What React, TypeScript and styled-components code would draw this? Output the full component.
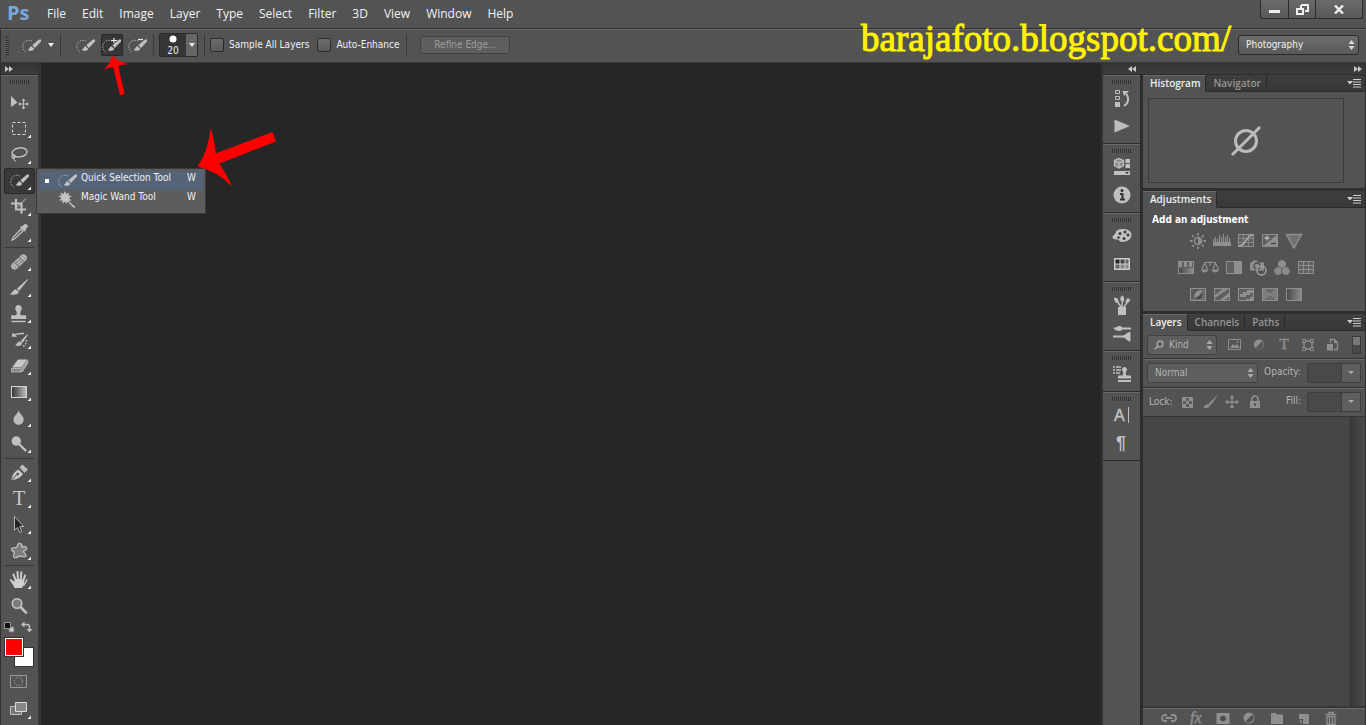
import React from "react";
import styled, { createGlobalStyle, css } from "styled-components";

const UI = `"DejaVu Sans Condensed", "DejaVu Sans", "Open Sans", sans-serif`;
const SEGOE = `"Open Sans", "Noto Sans", sans-serif`;

const Global = createGlobalStyle`
  * { box-sizing: border-box; }
  html, body { margin: 0; background: #262626; }
  button, select, input { font: inherit; color: inherit; margin: 0; }
  button { padding: 0; border: 0; background: none; }
  svg { display: block; flex: none; }
`;

/* ---------- shell ---------- */
const App = styled.div`
  display: flex;
  flex-direction: column;
  height: 100vh;
  overflow: hidden;
  position: relative;
  background: #535353;
  color: #f0f0f0;
  font: 10px/14px ${UI};
`;
const MenuBar = styled.header`
  display: flex;
  height: 29px;
  flex: none;
  border-bottom: 1px solid #2b2b2b;
`;
const Logo = styled.div`
  width: 38px;
  padding-left: 7px;
  font: 700 20px/26px ${SEGOE};
  color: #7aa7d8;
`;
const Menus = styled.nav`
  display: flex;
  flex: 1;
  align-items: center;
  gap: 16px;
  padding-left: 9px;
`;
const MenuButton = styled.button`
  font: 12px/28px ${SEGOE};
  color: #f2f2f2;
`;
const WindowButtons = styled.div`
  display: flex;
  height: 19px;
  margin-right: 3px;
  border: 1px solid #2c2c2c;
  border-top: 0;
  border-radius: 0 0 3px 3px;
  background: linear-gradient(#6a6a6a, #595959);
`;
const WindowButton = styled.button<{ $w: number }>`
  display: flex;
  justify-content: center;
  align-items: center;
  width: ${(p) => p.$w}px;
  & + & { border-left: 1px solid #2c2c2c; }
`;
const OptionsBar = styled.div`
  display: flex;
  align-items: center;
  flex: none;
  height: 34px;
  padding: 0 7px 2px 5px;
  border-top: 1px solid #6c6c6c;
  border-bottom: 1px solid #3a3a3a;
  border-left: 1px solid #2f2f2f;
`;
const VGrip = styled.span`
  width: 3px;
  height: 19px;
  margin-right: 13px;
  background: repeating-linear-gradient(#2e2e2e 0 1px, #5e5e5e 1px 2px);
`;
const VSep = styled.span<{ $l: number; $r: number }>`
  width: 1px;
  height: 22px;
  margin: 0 ${(p) => p.$r}px 0 ${(p) => p.$l}px;
  background: #3a3a3a;
`;
const ToolPreset = styled.button`
  display: flex;
  align-items: center;
  gap: 2px;
`;
const ModeButton = styled.button<{ $on?: boolean }>`
  display: flex;
  align-items: center;
  justify-content: center;
  width: 22px;
  height: 22px;
  margin-right: 4px;
  border-radius: 2px;
  ${(p) => p.$on && css`background: #363636; box-shadow: inset 0 0 0 1px #292929;`}
`;
const BrushSize = styled.button`
  display: flex;
  width: 39px;
  height: 24px;
  border: 1px solid #2b2b2b;
  border-radius: 2px;
  background: #353535;
`;
const BrushDot = styled.span`
  display: flex;
  flex: 1;
  flex-direction: column;
  align-items: center;
  gap: 1px;
  padding-top: 1px;
  line-height: 13px;
`;
const BrushDrop = styled.span`
  display: flex;
  align-items: center;
  justify-content: center;
  width: 11px;
  background: #666;
`;
const Check = styled.label`
  display: flex;
  align-items: center;
  gap: 5px;
  margin-right: 8px;
`;
const CheckBox = styled.input`
  appearance: none;
  width: 14px;
  height: 14px;
  border: 1px solid #2b2b2b;
  border-radius: 2px;
  background: linear-gradient(#6c6c6c, #5a5a5a);
`;
const Refine = styled.button`
  width: 90px;
  height: 18px;
  border: 1px solid #404040;
  border-radius: 3px;
  background: #5e5e5e;
  color: #9c9c9c;
`;
const Site = styled.div`
  flex: 1;
  margin-right: 7px;
  padding-bottom: 12px;
  text-align: right;
  white-space: nowrap;
  font: 37px/32px "Liberation Serif", serif;
  color: #fff200;
  -webkit-text-stroke: 1px #fff200;
`;

/* ---------- drop-downs ---------- */
const SelectBox = styled.span<{ $w: number; $dim?: boolean }>`
  position: relative;
  display: block;
  flex: none;
  width: ${(p) => p.$w}px;
  height: 20px;
  color: ${(p) => (p.$dim ? "#b4b4b4" : "#f0f0f0")};
  & > svg { position: absolute; right: 4px; top: 5px; pointer-events: none; }
`;
const Select = styled.select<{ $pad?: number; $dim?: boolean }>`
  appearance: none;
  width: 100%;
  height: 20px;
  padding: 0 12px 0 ${(p) => p.$pad ?? 7}px;
  border: 1px solid ${(p) => (p.$dim ? "#414141" : "#2b2b2b")};
  border-radius: 3px;
  background: ${(p) => (p.$dim ? "#5e5e5e" : "linear-gradient(#6d6d6d, #595959)")};
`;
const Lens = styled.span`
  position: absolute;
  left: 7px;
  top: 5px;
  pointer-events: none;
`;

/* ---------- work area ---------- */
const Work = styled.main`
  display: flex;
  flex: 1;
  min-height: 0;
  border-left: 1px solid #2f2f2f;
`;
const Toolbar = styled.aside`
  display: flex;
  flex: none;
  flex-direction: column;
  width: 40px;
  border-right: 3px solid #353535;
`;
const Strip = styled.div`
  display: flex;
  align-items: center;
  flex: none;
  height: 12px;
  background: linear-gradient(#333, #3d3d3d);
  border-bottom: 1px solid #2b2b2b;
`;
const ToolStrip = styled(Strip)`padding-left: 4px;`;
const ToolGrip = styled.div`
  flex: none;
  height: 15px;
  padding: 4px 0 0 9px;
  border-top: 1px solid #6a6a6a;
`;
const Dots = styled.span`
  display: block;
  width: 19px;
  height: 4px;
  background: repeating-linear-gradient(90deg, #2e2e2e 0 1px, #5e5e5e 1px 2px);
`;
const ToolSlot = styled.div`
  position: relative;
  flex: none;
  height: 26px;
  padding-left: 3px;
`;
const ToolButton = styled.button<{ $on?: boolean }>`
  display: block;
  width: 31px;
  height: 26px;
  border-radius: 3px;
  ${(p) => p.$on && css`background: #383838; box-shadow: inset 0 0 0 1px #282828;`}
`;
const ToolSep = styled.hr`
  flex: none;
  width: 29px;
  height: 1px;
  margin: 1px 0 1px 4px;
  border: 0;
  background: #383838;
`;
const SwatchMini = styled.div`
  display: flex;
  justify-content: space-between;
  flex: none;
  width: 29px;
  margin: 2px 0 4px 3px;
`;
const Swatches = styled.div`
  position: relative;
  flex: none;
  height: 32px;
  margin-left: 3px;
`;
const Swatch = styled.button<{ $c: string; $back?: boolean }>`
  position: absolute;
  left: ${(p) => (p.$back ? 10 : 0)}px;
  top: ${(p) => (p.$back ? 10 : 0)}px;
  width: 20px;
  height: 20px;
  background: ${(p) => p.$c};
  border: 1px solid #333;
  box-shadow: inset 0 0 0 1px #fff;
`;

const Flyout = styled.ul`
  position: absolute;
  z-index: 2;
  left: 35px;
  top: 0;
  width: 170px;
  height: 46px;
  margin: 0;
  padding: 2px;
  list-style: none;
  border: 1px solid #3a3a3a;
  background: #5d5d5d;
`;
const FlyItem = styled.button<{ $on?: boolean }>`
  display: flex;
  align-items: center;
  width: 100%;
  height: 19px;
  padding: 0 7px 0 6px;
  text-align: left;
  ${(p) => p.$on && css`background: #556378;`}
`;
const FlyMark = styled.span<{ $on?: boolean }>`
  width: 4px;
  height: 4px;
  margin-right: 9px;
  ${(p) => p.$on && css`background: #fff;`}
`;
const FlyName = styled.span`
  flex: 1;
  padding: 0 0 5px 3px;
`;
const FlyKey = styled.span`padding-bottom: 5px;`;

const Canvas = styled.section`
  flex: 1;
  background: #262626;
`;
const Dock = styled.aside`
  display: flex;
  flex: none;
  flex-direction: column;
  width: 265px;
  border-left: 2px solid #333;
  border-right: 1px solid #2f2f2f;
`;
const DockStrip = styled(Strip)`
  justify-content: space-between;
  padding: 0 3px 0 25px;
`;
const DockBody = styled.div`
  display: flex;
  flex: 1;
  min-height: 0;
`;
const IconColumn = styled.div`
  width: 40px;
  border-right: 3px solid #2d2d2d;
`;
const IconGroup = styled.div`
  padding: 4px 0 3px;
  border-top: 1px solid #6a6a6a;
  border-bottom: 1px solid #2b2b2b;
  & > span { margin: 0 auto; }
`;
const PanelButton = styled.button`
  display: flex;
  align-items: center;
  justify-content: center;
  width: 37px;
  height: 28px;
`;
const Panels = styled.div`
  display: flex;
  flex: 1;
  flex-direction: column;
  min-width: 0;
`;
const Panel = styled.section<{ $h?: number }>`
  display: flex;
  flex-direction: column;
  ${(p) => (p.$h ? css`flex: none; height: ${p.$h}px; border-bottom: 3px solid #2f2f2f;` : css`flex: 1; min-height: 0;`)}
`;
const Tabs = styled.div`
  display: flex;
  flex: none;
  height: 17px;
  background: linear-gradient(#3e3e3e, #383838);
`;
const Tab = styled.button<{ $on?: boolean }>`
  padding: 0 5px 1px 7px;
  border-right: 1px solid #2a2a2a;
  font: 600 10px/14px ${SEGOE};
  color: ${(p) => (p.$on ? "#f0f0f0" : "#969696")};
  border-top: 1px solid ${(p) => (p.$on ? "#6a6a6a" : "transparent")};
  border-bottom: 1px solid ${(p) => (p.$on ? "transparent" : "#2a2a2a")};
  ${(p) => p.$on && css`background: #535353;`}
`;
const TabRest = styled.span`
  display: flex;
  flex: 1;
  align-items: center;
  justify-content: flex-end;
  padding-right: 4px;
  border-bottom: 1px solid #2a2a2a;
`;
const Histogram = styled.div`
  display: flex;
  flex: 1;
  align-items: center;
  justify-content: center;
  margin: 6px 21px 5px 5px;
  border: 1px solid #3b3b3b;
`;
const AdjTitle = styled.h2`
  margin: 5px 0 5px 9px;
  font: 700 10px/14px ${UI};
  color: #fff;
`;
const AdjRow = styled.div`
  display: flex;
  justify-content: center;
  padding-right: 16px;
  margin-bottom: 9px;
`;
const AdjButton = styled.button`
  display: flex;
  justify-content: center;
  width: 24px;
  height: 18px;
`;
const LayerRow = styled.div`
  display: flex;
  align-items: center;
  flex: none;
  height: 28px;
  padding: 0 4px;
  color: #b4b4b4;
  border-bottom: 1px solid #333;
  & + & {
    height: 29px;
    padding-bottom: 2px;
    border-top: 1px solid #6a6a6a;
  }
`;
const FilterIcons = styled.div`
  display: flex;
  flex: 1;
  justify-content: space-between;
  padding: 0 13px 0 11px;
`;
const PlainButton = styled.button`
  display: flex;
  align-items: center;
  justify-content: center;
`;
const Toggle = styled.button`
  width: 9px;
  height: 18px;
  border: 1px solid #3b3b3b;
  background: linear-gradient(#777 0 8px, #484848 8px);
`;
const RowLabel = styled.label<{ $push?: boolean }>`
  margin-left: ${(p) => (p.$push ? "auto" : "2px")};
  padding-bottom: ${(p) => (p.$push ? 2 : 0)}px;
`;
const Combo = styled.span`
  display: flex;
  width: 54px;
  height: 20px;
  margin-left: 6px;
  border: 1px solid #3d3d3d;
  border-radius: 2px;
`;
const ComboInput = styled.input`
  width: 34px;
  padding: 0 2px;
  border: 0;
  border-right: 1px solid #3d3d3d;
  background: #494949;
`;
const ComboDrop = styled.button`
  display: flex;
  flex: 1;
  align-items: center;
  justify-content: center;
  background: #5e5e5e;
`;
const Locks = styled.div`
  display: flex;
  gap: 6px;
  padding-left: 7px;
`;
const LayerArea = styled.div`
  display: flex;
  flex: 1;
  min-height: 0;
  background: #464646;
  border-bottom: 2px solid #363636;
`;
const ScrollTrack = styled.div`
  width: 15px;
  margin-left: auto;
  border-left: 1px solid #333;
  background: linear-gradient(90deg, #3a3a3a, #4a4a4a);
`;
const LayerFoot = styled.div`
  display: flex;
  flex: none;
  height: 17px;
  padding: 1px 0 0 12px;
  border-top: 1px solid #6c6c6c;
`;
const FootButton = styled.button`
  display: flex;
  justify-content: center;
  width: 27px;
  height: 16px;
`;
const Overlay = styled.svg<{ $x: number; $y: number }>`
  position: absolute;
  z-index: 3;
  left: ${(p) => p.$x}px;
  top: ${(p) => p.$y}px;
  pointer-events: none;
`;

/* ---------- icon drawing ---------- */
const L = "#c0c0c0";
const UpDown = ({ c = "#d8d8d8" }: { c?: string }) => (
  <svg width="7" height="10"><path d="M.5 4h6L3.500 0zM.5 6h6L3.500 10z" fill={c} /></svg>
);
const Chevrons = ({ left }: { left?: boolean }) => (
  <svg width="8" height="6" viewBox="0 0 8 6">
    <path d={left ? "M4 0v6L0 3zM8 0v6L4 3z" : "M0 0v6l4-3zM4 0v6l4-3z"} fill="#c8c8c8" />
  </svg>
);
const PanelMenu = () => (
  <svg width="14" height="9">
    <path d="M0 2h6L3 5.500z" fill="#ccc" />
    <path d="M6 .5h8M6 3h8M6 5.500h8M6 8h8" stroke="#ccc" />
  </svg>
);

/* brush with a dotted selection ring, origin at the ring's top left */
const QuickBrush = ({ sign }: { sign?: "+" | "-" }) => (
  <>
    <path d="M13 3.500A6 6 0 1 0 7 14.500" transform="translate(-3 -.5)" fill="none" stroke="#c8c8c8" strokeWidth="1" strokeDasharray="1.200 1.300" />
    <path d="M19 1.500 17 1.500 10.300 7.300l2.600 2.800L19 3.500z" fill={L} />
    <path d="M9.500 8.200c-2 .3-2 2.800-3.700 3.800 2.600 1.600 6 .8 6.400-1.300z" fill={L} />
    {sign && <path d={sign === "+" ? "M9 2.500h6M12 0v5" : "M10 1.500h5"} stroke="#eee" strokeWidth="1.200" />}
  </>
);
const QuickIcon = ({ sign }: { sign?: "+" | "-" }) => (
  <svg width="20" height="15" viewBox="0 0 20 15"><QuickBrush sign={sign} /></svg>
);

const tools: { name: string; art: React.ReactNode; noMore?: boolean; sep?: boolean; on?: boolean }[] = [
  { name: "Move", noMore: true, art: <><path d="M7 6v11l6.500-4.500z" fill={L} /><path d="M15 14h9M19.500 9.500v9" stroke={L} strokeWidth="1.200" /><path d="m19.500 8.500-2 2.500h4zM19.500 19.500l-2-2.500h4zM14 14l2.500-2v4zM25 14l-2.500-2v4z" fill={L} /></> },
  { name: "Marquee", art: <path d="M8.500 6.500h13v12h-13z" fill="none" stroke="#d4d4d4" strokeDasharray="3 2" /> },
  { name: "Lasso", art: <g fill="none" stroke={L} strokeWidth="1.500"><ellipse cx="15.500" cy="10.500" rx="7.500" ry="4.500" transform="rotate(-8 15 10)" /><circle cx="9.500" cy="14.500" r="1.500" /><path d="M10 16c-.5 2 0 3 2 3" strokeWidth="1" /></g> },
  { name: "Quick Selection", on: true, art: <g transform="translate(6 5)"><QuickBrush /></g> },
  { name: "Crop", art: <><path d="M7 9.500h10.500V19.500M12 5v10.500H22" fill="none" stroke={L} strokeWidth="2.200" /><path d="m22 4.500-9 9" stroke={L} /></> },
  { name: "Eyedropper", sep: true, art: <><path d="m17 9-8 8.500-1 2.500 2.500-1L19 11z" fill="none" stroke={L} strokeWidth="1.300" /><path d="m16 7 1.500-1 1 .5C20 4 22 3.500 23.200 4.700s.5 3-1.700 4.500l.5 1-1 1.500z" fill={L} /></> },
  { name: "Healing Brush", art: <g transform="rotate(-43 15 13)"><rect x="5.500" y="9.500" width="19" height="7" rx="3.500" fill="#b4b4b4" /><path d="M11.500 9.500v7M18.500 9.500v7" stroke="#777" /><path d="M13 11.500h1.200M15.800 11.500H17M13 14.500h1.200M15.800 14.500H17" stroke="#444" /><path d="M8 11.500h1.200M8 14.500h1.200M21 11.500h1.200M21 14.500h1.200" stroke="#777" /></g> },
  { name: "Brush", art: <><path d="M23.500 4 13 13.500l2 2.500L23.900 5z" fill={L} /><path d="M12 14.200c-3 .2-3.300 3.300-6 5 4 1.300 8.500.6 8.700-2.400z" fill={L} /></> },
  { name: "Clone Stamp", art: <><path d="M14.500 4a3.500 3.500 0 0 1 2.300 6c-.8.8-.8 3.500.2 4.300h5.200V18H7.200v-3.700H12c1-.8 1-3.500.2-4.300A3.500 3.500 0 0 1 14.500 4z" fill={L} /><path d="M7.500 20.500h14" stroke={L} strokeWidth="1.500" /></> },
  { name: "History Brush", art: <><path d="m23.500 7-6.800 7 2 2L23.700 8zM16 14.500c-2.500 0-3 2.500-5 4 3.500 1 7 .3 7-2.500z" fill={L} /><path d="M9 9c4-3 8-2.500 11-2.500" fill="none" stroke={L} strokeWidth="1.500" /><path d="m7.500 9.500 5.500.5-4-4.500z" fill={L} /><path d="M22.500 13c0 3-1 5-3.500 6.500" fill="none" stroke={L} strokeDasharray="1.500 1.500" strokeWidth="1.500" /></> },
  { name: "Eraser", art: <><path d="m14 6.500h9.500l-6 8H8z" fill="#c8c8c8" /><path d="M7.500 15.500h9.500V19H7.500z" fill="#888" stroke={L} strokeWidth=".8" /><path d="m18 15.500 5.800-8V10L18 19z" fill="#9a9a9a" stroke="#ccc" strokeWidth=".8" /></> },
  { name: "Gradient", art: <rect x="7.500" y="7.500" width="15" height="11" fill="url(#grad)" stroke="#d4d4d4" /> },
  { name: "Blur", art: <path d="M14.700 5c.8 4 5 6 5 9.700a5.100 5.100 0 0 1-10.300 0C9.400 11 13.900 9 14.700 5z" fill="#bcbcbc" /> },
  { name: "Dodge", sep: true, art: <><circle cx="12.300" cy="10" r="4.700" fill="#c0c0c0" /><path d="m15.500 13.500 6 6" stroke={L} strokeWidth="2.400" strokeLinecap="round" /></> },
  { name: "Pen", art: <><path d="M7.500 20c.5-4 2-8 7-10.500l4.500 4.500C16.500 18 12.500 19.500 7.500 20z" fill="#c8c8c8" /><path d="m15.500 7.500 3-3 5.500 5-3.500 3.500z" fill="#bbb" /><path d="m8 19.500 5-5" stroke="#444" /><circle cx="13.700" cy="14" r="1.200" fill="#444" /></> },
  { name: "Type", art: <text x="15" y="19" textAnchor="middle" fill="#c8c8c8" fontFamily="Liberation Serif, serif" fontSize="20">T</text> },
  { name: "Path Selection", art: <path d="M10.500 4.500V18l3-2.500 2.200 5 2-1-2-5h4z" fill="#222" stroke="#b4b4b4" /> },
  { name: "Custom Shape", sep: true, art: <path d="M15 5.500c2.500-.5 3 1 2.800 3.300 2-.5 5-.5 5 1.700 0 2-2.500 2-3.500 3 .5 1.500 3.500 2.500 2.500 4.700-1.200 2-4.500-.5-6-.2-2 .5-4 2.700-6 1.200-1.500-1.500 1-3.500.5-5-.8-1-3.300-1.500-2.800-3.400.6-1.800 3.500-.8 5-1.500C13.800 8.500 13 6 15 5.500z" fill="#7d7d7d" stroke="#bdbdbd" strokeWidth="1.300" /> },
  { name: "Hand", art: <><path d="M10.500 21c-1-3.200-3.700-5.500-4.800-8.300.8-1 2-.5 4 2L12 12h6l2 3v3l-2.300 3z" fill="#cfcfcf" /><path d="M11.700 13.500 9.500 7.500M14 13l-.5-8M16.800 13l.5-7.700M19 14.500l2-6" stroke="#cfcfcf" strokeWidth="2" strokeLinecap="round" /><path d="m20 18 2.800-5" stroke="#cfcfcf" strokeWidth="1.500" strokeLinecap="round" /></> },
  { name: "Zoom", noMore: true, art: <><circle cx="13" cy="10.500" r="4.700" fill="#7c7c7c" stroke="#c4c4c4" strokeWidth="1.600" /><path d="m17 14.500 5 5" stroke={L} strokeWidth="2.600" strokeLinecap="round" /></> },
];

const Tool = ({ name, art, noMore, on }: { name: string; art: React.ReactNode; noMore?: boolean; on?: boolean }) => (
  <ToolButton aria-label={name} $on={on}>
    <svg width="30" height="26" viewBox="0 0 30 26">
      {art}
      {!noMore && <path d="M27 18.500V22h-3.500z" fill="#eee" />}
    </svg>
  </ToolButton>
);

const Svg = ({ w = 20, h = 20, children }: { w?: number; h?: number; children: React.ReactNode }) => (
  <svg width={w} height={h} viewBox={`0 0 ${w} ${h}`} fill="none">{children}</svg>
);
const D = "#8f8f8f";

const iconGroups: [string, React.ReactNode][][] = [
  [
    ["History", <><path d="M3.500 2.500h4v3h-4zM3.500 8.500h4v3h-4z" stroke={L} /><path d="M3 14h5v5H3z" fill={L} /><path d="M12 18c5-3 5-8 2.500-12" stroke={L} strokeWidth="2" /><path d="M10.500 3h6.500l-5 5z" fill={L} /></>],
    ["Actions", <path d="M2.500 3.500v13L18 10z" fill="#bdbdbd" />],
  ],
  [
    ["Properties", <><path d="m7 1.500 4.500 2v5L7 11 2.500 8.500v-5z" fill="#8a8a8a" /><path d="m7 1.500 4.500 2v5L7 11 2.500 8.500v-5zM2.500 4 7 6l4.500-2M7 6v5" stroke={L} strokeWidth="1.300" /><path d="M13.500 2H18v4h-4.500zM13.500 7H18v4h-4.500zM2 14h16v4H2z" fill={L} /><path d="M13 15h4l-2 2z" fill="#333" /></>],
    ["Info", <><circle cx="10" cy="10" r="8.500" fill={L} /><path d="M8 9h2.500v6M8 14.500h5" stroke="#333" strokeWidth="2" /><circle cx="10" cy="5.500" r="1.500" fill="#333" /></>],
  ],
  [
    ["Color", <><path d="M11 3c5.500 0 8.500 2.500 8.500 6 0 4-4 7-9.500 7-3 0-2.500-2.500-4.500-2.500C3 13.500.5 13 .5 11c0-1.800 2.500-2 3-4C4 4.500 7 3 11 3z" fill={L} /><g fill="#3c3c3c"><circle cx="6.500" cy="11.500" r="1.300" /><circle cx="8" cy="7.500" r="1.500" /><circle cx="13" cy="6" r="1.500" /><circle cx="16" cy="9" r="1.500" /><circle cx="12" cy="12.500" r="1.500" /></g></>],
    ["Swatches", <><path d="M2 4h16v12H2z" fill="#ccc" /><path d="M3.500 5.500h4v4h-4z" fill="#222" /><path d="M8.500 5.500h4v4h-4z" fill="#444" /><path d="M13.500 5.500h3v4h-3zM3.500 10.500h4v4h-4z" fill="#666" /><path d="M8.500 10.500h4v4h-4zM13.500 10.500h3v4h-3z" fill="#888" /></>],
  ],
  [
    ["Brush Presets", <><path d="M6 12h8v8H6z" fill={L} /><path d="M9 12 4.500 5M10 12l.5-8M12 12l4-6" stroke={L} strokeWidth="1.500" /><path d="M2 3c3-1 5 1 4.500 5C4 8.500 2 6.500 2 3zM9 6c-1.500-2-.5-5 2-5.500C12 2 12.500 4 12 6.500zM13 7l2.500-4 3 1.500-2 3z" fill={L} /></>],
    ["Brush", <><path d="M10 5.500h9M1 13.500h11" stroke={L} strokeWidth="2" /><path d="M1 4.500c3 1 4-2 7-1.500 3 .5 3 4.500 0 5-3 .3-5-.5-7-3.500zM11.500 12.500c2-.5 4-4 7-3.500v9.500c-3 0-5-3.500-7-4z" fill={L} /></>],
  ],
  [
    ["Clone Source", <><path d="M1 3h2M1 6h2M1 9h2M4 3h5M4 6h5M4 9h4" stroke={L} strokeWidth="1.500" /><path d="M12.500 3a2.700 2.700 0 0 1 1.700 4.600c-.6.8-.6 3.200.2 3.900H19v3H6v-3h4.600c.8-.7.8-3.100.2-3.900A2.700 2.700 0 0 1 12.500 3zM6 16h13v2H6z" fill={L} /></>],
  ],
  [
    ["Character", <><text x="2" y="16" fill={L} stroke={L} strokeWidth=".5" fontFamily="Liberation Sans, sans-serif" fontSize="16">A</text><path d="M16.500 2v16" stroke={L} /></>],
    ["Paragraph", <text x="4" y="16" fill={L} fontFamily="Liberation Sans, sans-serif" fontWeight="700" fontSize="18">¶</text>],
  ],
];

const F = () => <rect x="1.500" y="2.500" width="15" height="12" stroke={D} fill="#5f5f5f" />;
const adjustments: [string, React.ReactNode][][] = [
  [
    ["Brightness/Contrast", <><circle cx="9" cy="9" r="3.500" stroke={D} strokeWidth="1.500" /><path d="M9 5.500a3.500 3.500 0 0 1 0 7z" fill={D} /><path d="M9 1v2.500M9 14.500V17M1 9h2.500M14.500 9H17M3.300 3.300 5 5M13 13l1.700 1.700M14.700 3.300 13 5M5 13l-1.700 1.700" stroke={D} strokeWidth="1.800" /></>],
    ["Levels", <><path d="M0 10h18v4H0z" fill={D} /><path d="M.5 10V7M2.500 10V5M4.500 10V7M6.500 10V3M8.500 10V5M10.500 10V2M12.500 10V5M14.500 10V3M16.500 10V6" stroke={D} strokeWidth="1.200" /></>],
    ["Curves", <><F /><path d="M6.500 3v11M11.500 3v11M2 6.500h14M2 10.500h14" stroke="#848484" /><path d="M2 14c7 0 7-11 14-11" stroke="#aaa" strokeWidth="1.500" /></>],
    ["Exposure", <><F /><path d="m2 14 14-11v11z" fill={D} /><path d="M3.500 6h5M6 3.500v5" stroke="#bbb" strokeWidth="1.300" /><path d="M10 11.500h5" stroke="#444" strokeWidth="1.300" /></>],
    ["Vibrance", <path d="M1.500 2.500h15L9 16z" stroke={D} strokeWidth="1.500" fill="#707070" />],
  ],
  [
    ["Hue/Saturation", <><F /><path d="M2 3h3v5H2zM7 3h3v5H7zM12 3h3v5h-3z" fill={D} /><path d="M2 9h14v5H2z" fill="url(#dim)" /></>],
    ["Color Balance", <><path d="M3 3.500h12M9 2v5M3.500 4 1 10M3.500 4 6.500 10M14.500 4 12 10M14.500 4 17.500 10" stroke={D} strokeWidth="1.200" /><path d="M0 10.500h7.500c-1 4-6.500 4-7.500 0zM10.500 10.500H18c-1 4-6.500 4-7.500 0z" fill={D} /></>],
    ["Black & White", <><F /><path d="M9 3h7v11H9z" fill={D} /></>],
    ["Photo Filter", <><path d="M1 3.500h2l1-2h4l1 2h6v8H1z" fill={D} /><circle cx="8" cy="7" r="3" stroke="#4d4d4d" strokeWidth="1.300" /><circle cx="12.500" cy="11.500" r="4.500" stroke="#a0a0a0" strokeWidth="1.500" /></>],
    ["Channel Mixer", <><circle cx="9" cy="5.500" r="4.200" fill={D} /><circle cx="5.200" cy="12" r="4.300" fill="#8a8a8a" stroke="#555" strokeWidth=".8" /><circle cx="12.800" cy="12" r="4.300" fill="#8a8a8a" stroke="#555" strokeWidth=".8" /></>],
    ["Color Lookup", <><F /><path d="M6.500 3v11M11.500 3v11M2 6.500h14M2 10.500h14" stroke={D} /></>],
  ],
  [
    ["Invert", <><F /><path d="M16 3v11H2z" fill="#6c6c6c" /><circle cx="9" cy="8.500" r="4.500" fill="#484848" /><path d="M5.500 12C4 7 8 3.500 13.500 4c-1 4-4 7-8 8z" fill={D} /></>],
    ["Posterize", <><F /><path d="m2 9 8-6h5L2 12zM7 14l9-7v4l-4 3z" fill={D} /></>],
    ["Threshold", <><F /><path d="M3 8h3V6h4V4h6v3h-3v2H9v2H3zM9 13h4v-2h3v3H9z" fill={D} /></>],
    ["Selective Color", <><F /><path d="M2 3h14L9 8.500zM2 14h14L9 8.500z" fill="#6a6a6a" /><path d="M2 3v11l7-5.500zM16 3v11L9 8.500z" fill="#7c7c7c" /><path d="m2 3 14 11M16 3 2 14" stroke={D} /></>],
    ["Gradient Map", <rect x="1.500" y="2.500" width="15" height="12" stroke={D} fill="url(#dim)" />],
  ],
];

const filters: [string, React.ReactNode][] = [
  ["Pixel layers", <><path d="M.5 2.500h12v10H.5z" stroke={D} /><path d="m2 11 3-4 2 2 2-2 3 4z" fill={D} /><circle cx="9.500" cy="5" r="1" fill={D} /></>],
  ["Adjustment layers", <><circle cx="7" cy="7.500" r="5" fill={D} /><path d="M3.800 10.700 10.200 4.300A4.500 4.500 0 0 1 3.800 10.700z" fill="#555" /></>],
  ["Type layers", <text x="7" y="12" textAnchor="middle" fill={D} stroke={D} strokeWidth=".5" fontFamily="Liberation Serif, serif" fontSize="15">T</text>],
  ["Shape layers", <><path d="M3 4h8v8H3z" stroke={D} strokeWidth="1.300" /><path d="M1.500 2.500h3v3h-3zM9.500 2.500h3v3h-3zM1.500 10.500h3v3h-3zM9.500 10.500h3v3h-3z" fill="#535353" stroke={D} /></>],
  ["Smart objects", <><path d="M5.500 6V2.500h4l3 3v7H9" stroke={D} strokeWidth="1.300" /><path d="M2 7h6v6.500H2z" fill={D} /><path d="M9 2v4h4z" fill={D} /></>],
];
const locks: [string, React.ReactNode][] = [
  ["Lock transparent pixels", <><path d="M2.500 3.500h10v10h-10z" stroke={D} fill="#5c5c5c" /><path d="M3 4h3v3H3zM9 4h3v3H9zM6 7h3v3H6zM3 10h3v3H3zM9 10h3v3H9z" fill={D} /></>],
  ["Lock image pixels", <><path d="M16 1 6.500 9.500l2 2z" fill={D} /><path d="M6 10c-2 0-3 2-5 3.500 4 1 7 0 7-2z" fill={D} /></>],
  ["Lock position", <><path d="M8 3v10M3 8h10" stroke={D} strokeWidth="1.300" /><path d="m8 1-2.500 3h5zM8 15l-2.500-3h5zM1 8l3-2.500v5zM15 8l-3-2.500v5z" fill={D} /></>],
  ["Lock all", <><path d="M4 7h10v7H4z" fill={D} /><path d="M6 7V5a3 3 0 0 1 6 0v2" stroke={D} strokeWidth="1.600" /><path d="M9 9v3" stroke="#444" strokeWidth="1.500" /></>],
];
const foot: [string, React.ReactNode][] = [
  ["Link layers", <path d="M7 5H5a3 3 0 0 0 0 6h2M11 5h2a3 3 0 0 1 0 6h-2M5.500 8h7" stroke={D} strokeWidth="1.800" />],
  ["Layer style", <text x="3" y="13" fill={D} stroke={D} strokeWidth=".4" fontFamily="Liberation Serif, serif" fontStyle="italic" fontSize="16">fx</text>],
  ["Layer mask", <><path d="M2.500 3h13v11h-13z" fill={D} /><circle cx="9" cy="8.500" r="2.800" fill="#4b4b4b" /></>],
  ["Adjustment layer", <><circle cx="8" cy="8" r="5.500" fill={D} /><path d="M4.500 11.500 11.500 4.500A5 5 0 0 1 4.500 11.500z" fill="#505050" /></>],
  ["Group", <path d="M3 3h5l1 1.500h6V14H3z" fill={D} />],
  ["New layer", <><path d="M4 4h10v10H8V9H4z" fill={D} /><path d="M4 10.500h3V14z" fill={D} /></>],
  ["Delete", <><path d="M3.500 4.500h11M7 4V2.500h4V4" stroke={D} strokeWidth="1.500" /><path d="M5 6.500h8v8H5zM7.500 7v7M10.500 7v7" stroke={D} strokeWidth="1.300" /></>],
];

const menus = ["File", "Edit", "Image", "Layer", "Type", "Select", "Filter", "3D", "View", "Window", "Help"];

export default function Photoshop() {
  return (
    <App>
      <Global />
      <svg width="0" height="0" style={{ position: "absolute" }}>
        <defs>
          <linearGradient id="grad"><stop stopColor="#333" /><stop offset="1" stopColor="#c0c0c0" /></linearGradient>
          <linearGradient id="dim"><stop stopColor="#484848" /><stop offset="1" stopColor="#8e8e8e" /></linearGradient>
        </defs>
      </svg>

      <MenuBar>
        <Logo>Ps</Logo>
        <Menus>{menus.map((m) => <MenuButton key={m}>{m}</MenuButton>)}</Menus>
        <WindowButtons>
          <WindowButton $w={27} aria-label="Minimize"><Svg w={11} h={9}><path d="M0 5h11v3H0z" fill="#eee" /></Svg></WindowButton>
          <WindowButton $w={27} aria-label="Restore"><Svg w={13} h={11}><path d="M5 1h7v6H9M5 1v3M1 5h6v5H1z" stroke="#eee" strokeWidth="2" /></Svg></WindowButton>
          <WindowButton $w={47} aria-label="Close"><Svg w={10} h={9}><path d="m1 .5 8 8M9 .5l-8 8" stroke="#eee" strokeWidth="2.400" /></Svg></WindowButton>
        </WindowButtons>
      </MenuBar>

      <OptionsBar>
        <VGrip />
        <ToolPreset aria-label="Tool preset"><QuickIcon /><Svg w={10} h={4}><path d="M4 0h6L7 4z" fill="#eee" /></Svg></ToolPreset>
        <VSep $l={6} $r={14} />
        <ModeButton aria-label="New selection"><QuickIcon /></ModeButton>
        <ModeButton $on aria-label="Add to selection"><QuickIcon sign="+" /></ModeButton>
        <ModeButton aria-label="Subtract from selection"><QuickIcon sign="-" /></ModeButton>
        <VSep $l={0} $r={5} />
        <BrushSize aria-label="Brush size">
          <BrushDot><Svg w={8} h={8}><circle cx="4" cy="4" r="3.500" fill="#fff" /></Svg>20</BrushDot>
          <BrushDrop><Svg w={6} h={4}><path d="M0 0h6L3 4z" fill="#eee" /></Svg></BrushDrop>
        </BrushSize>
        <VSep $l={6} $r={5} />
        <Check><CheckBox type="checkbox" />Sample All Layers</Check>
        <Check><CheckBox type="checkbox" />Auto-Enhance</Check>
        <VSep $l={-1} $r={13} />
        <Refine>Refine Edge...</Refine>
        <Site>barajafoto.blogspot.com/</Site>
        <SelectBox $w={121}>
          <Select aria-label="Workspace"><option>Photography</option></Select>
          <UpDown />
        </SelectBox>
      </OptionsBar>

      <Work>
        <Toolbar>
          <ToolStrip><Chevrons /></ToolStrip>
          <ToolGrip><Dots /></ToolGrip>
          {tools.map((t) => (
            <React.Fragment key={t.name}>
              <ToolSlot>
                <Tool {...t} />
                {t.on && (
                  <Flyout>
                    <li><FlyItem $on><FlyMark $on /><QuickIcon /><FlyName>Quick Selection Tool</FlyName><FlyKey>W</FlyKey></FlyItem></li>
                    <li><FlyItem><FlyMark /><Svg w={20} h={17}><path d="m7 0 1.300 3L11 1.500 10.500 4.500l3.500.5-3 2 2.500 2.500-3 .5L17.500 16l-1.500 1-6.500-6.500L8.500 13 7 10.500 4.500 12.500 4.500 9.500 1 9.500 3.500 7 0 5l3.500-.5L2.500 1.500 5.500 3z" fill="#c4c4c4" /></Svg><FlyName>Magic Wand Tool</FlyName><FlyKey>W</FlyKey></FlyItem></li>
                  </Flyout>
                )}
              </ToolSlot>
              {t.sep && <ToolSep />}
            </React.Fragment>
          ))}
          <SwatchMini>
            <PlainButton aria-label="Default colors"><Svg w={11} h={12}><path d="M5 6h5v5H5z" fill="#ccc" stroke="#777" /><path d="M.5 1.500h6v6h-6z" fill="#111" stroke="#999" /></Svg></PlainButton>
            <PlainButton aria-label="Swap colors"><Svg w={12} h={12}><path d="M3 3.500h3a2.500 2.500 0 0 1 2.500 2.500v2" stroke={L} strokeWidth="1.400" /><path d="M0 3.500 3.500.5v6zM5.500 8h6l-3 3.500z" fill={L} /></Svg></PlainButton>
          </SwatchMini>
          <Swatches>
            <Swatch $c="#fff" $back aria-label="Background color" />
            <Swatch $c="#f00" aria-label="Foreground color" />
          </Swatches>
          <ToolSlot><ToolButton aria-label="Quick mask"><Svg w={30} h={26}><path d="M6.500 6.500h16v12h-16z" stroke="#9a9a9a" /><circle cx="14.500" cy="12.500" r="4" stroke="#aaa" strokeDasharray="1.200 1.300" /></Svg></ToolButton></ToolSlot>
          <ToolSlot><ToolButton aria-label="Screen mode"><Svg w={30} h={26}><path d="M6.500 11.500h11v8h-11z" fill="#777" stroke={L} /><path d="M11.500 7.500h11v9h-11z" fill="#888" stroke="#ddd" /><path d="M27 20.500V24h-3.500z" fill="#eee" /></Svg></ToolButton></ToolSlot>
        </Toolbar>

        <Canvas />

        <Dock>
          <DockStrip><Chevrons left /><Chevrons /></DockStrip>
          <DockBody>
            <IconColumn>
              {iconGroups.map((g, i) => (
                <IconGroup key={i}>
                  <Dots />
                  {g.map(([n, art]) => <PanelButton key={n} aria-label={n}><Svg>{art}</Svg></PanelButton>)}
                </IconGroup>
              ))}
            </IconColumn>
            <Panels>
              <Panel $h={116}>
                <Tabs><Tab $on>Histogram</Tab><Tab>Navigator</Tab><TabRest><PanelMenu /></TabRest></Tabs>
                <Histogram>
                  <Svg w={32} h={32}><circle cx="16" cy="16" r="10.500" stroke="#bcbcbc" strokeWidth="3" /><path d="M2 30 30 2" stroke="#bcbcbc" strokeWidth="3" /></Svg>
                </Histogram>
              </Panel>
              <Panel $h={123}>
                <Tabs><Tab $on>Adjustments</Tab><TabRest><PanelMenu /></TabRest></Tabs>
                <AdjTitle>Add an adjustment</AdjTitle>
                {adjustments.map((row, i) => (
                  <AdjRow key={i}>
                    {row.map(([n, art]) => <AdjButton key={n} aria-label={n}><Svg w={18} h={18}>{art}</Svg></AdjButton>)}
                  </AdjRow>
                ))}
              </Panel>
              <Panel>
                <Tabs><Tab $on>Layers</Tab><Tab>Channels</Tab><Tab>Paths</Tab><TabRest><PanelMenu /></TabRest></Tabs>
                <LayerRow>
                  <SelectBox $w={70} $dim>
                    <Select $dim $pad={21} aria-label="Filter kind"><option>Kind</option></Select>
                    <Lens><Svg w={10} h={10}><circle cx="6" cy="4" r="3" stroke="#aaa" strokeWidth="1.300" /><path d="M3.800 6.200.8 9.200" stroke="#aaa" strokeWidth="1.500" /></Svg></Lens>
                    <UpDown c="#aaa" />
                  </SelectBox>
                  <FilterIcons>{filters.map(([n, art]) => <PlainButton key={n} aria-label={n}><Svg w={14} h={15}>{art}</Svg></PlainButton>)}</FilterIcons>
                  <Toggle aria-label="Toggle filter" />
                </LayerRow>
                <LayerRow>
                  <SelectBox $w={111} $dim>
                    <Select $dim aria-label="Blend mode"><option>Normal</option></Select>
                    <UpDown c="#aaa" />
                  </SelectBox>
                  <RowLabel $push htmlFor="opacity">Opacity:</RowLabel>
                  <Combo><ComboInput id="opacity" type="text" /><ComboDrop aria-label="Opacity slider"><Svg w={6} h={3}><path d="M0 0h6L3 3z" fill="#aaa" /></Svg></ComboDrop></Combo>
                </LayerRow>
                <LayerRow>
                  <RowLabel as="span">Lock:</RowLabel>
                  <Locks>{locks.map(([n, art]) => <PlainButton key={n} aria-label={n}><Svg w={16} h={16}>{art}</Svg></PlainButton>)}</Locks>
                  <RowLabel $push htmlFor="fill">Fill:</RowLabel>
                  <Combo><ComboInput id="fill" type="text" /><ComboDrop aria-label="Fill slider"><Svg w={6} h={3}><path d="M0 0h6L3 3z" fill="#aaa" /></Svg></ComboDrop></Combo>
                </LayerRow>
                <LayerArea><ScrollTrack /></LayerArea>
                <LayerFoot>{foot.map(([n, art]) => <FootButton key={n} aria-label={n}><Svg w={18} h={16}>{art}</Svg></FootButton>)}</LayerFoot>
              </Panel>
            </Panels>
          </DockBody>
        </Dock>
      </Work>

      <Overlay $x={100} $y={55} width="32" height="42" viewBox="100 55 32 42">
        <path d="M112.300 56Q109 66 101.300 71.700Q107 67.500 113.300 67.300L120 95.200L124.700 94L118.200 66Q124 63.500 129.700 64.500Q119 62 112.300 56z" fill="#f00" />
      </Overlay>
      <Overlay $x={196} $y={126} width="82" height="62" viewBox="196 126 82 62">
        <path d="M197.500 166.500Q208 152 210.500 128Q215 140 215.500 153.500L272.500 132L276 141.500L219.500 163.500Q227 175 232 186.500Q217 171 197.500 166.500z" fill="#f00" />
      </Overlay>
    </App>
  );
}
